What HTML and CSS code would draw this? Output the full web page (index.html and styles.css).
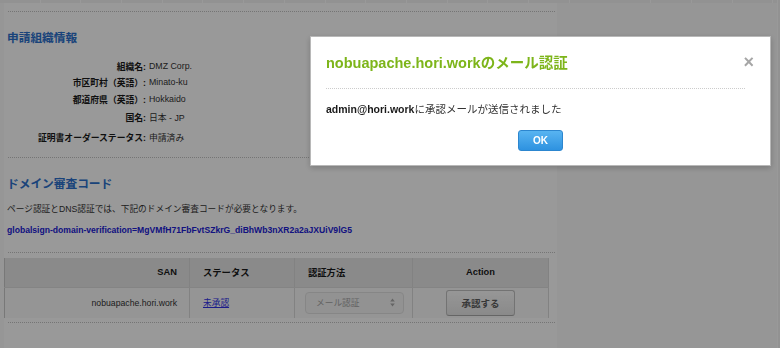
FILE: index.html
```html
<!DOCTYPE html>
<html lang="ja">
  <head>
    <meta charset="UTF-8" />
    <meta name="viewport" content="width=device-width, initial-scale=1.0" />
    <title>証明書申請</title>
    <link rel="stylesheet" href="styles.css">
  </head>
  <body>
    <div class="page">
      <div class="topbar"></div>

      <main class="panel">
        <hr class="dots" />

        <section class="org">
          <h2 class="heading">申請組織情報</h2>
          <dl class="info">
            <dt>組織名:</dt>
            <dd>DMZ Corp.</dd>
            <dt>市区町村（英語）:</dt>
            <dd>Minato-ku</dd>
            <dt>都道府県（英語）:</dt>
            <dd>Hokkaido</dd>
            <dt>国名:</dt>
            <dd>日本 - JP</dd>
            <dt>証明書オーダーステータス:</dt>
            <dd>申請済み</dd>
          </dl>
        </section>

        <hr class="dots" />

        <section class="domain">
          <h2 class="heading">ドメイン審査コード</h2>
          <p class="note">ページ認証とDNS認証では、下記のドメイン審査コードが必要となります。</p>
          <p class="code">globalsign-domain-verification=MgVMfH71FbFvtSZkrG_diBhWb3nXR2a2aJXUiV9lG5</p>
        </section>

        <hr class="dots" />

        <table class="san-table">
          <thead>
            <tr>
              <th class="col-san">SAN</th>
              <th class="col-status">ステータス</th>
              <th class="col-method">認証方法</th>
              <th class="col-action">Action</th>
            </tr>
          </thead>
          <tbody>
            <tr>
              <td class="col-san">nobuapache.hori.work</td>
              <td class="col-status"><a href="#" class="pending">未承認</a></td>
              <td class="col-method">
                <div class="select">
                  <span>メール認証</span>
                  <svg width="5" height="9" viewBox="0 0 5 9">
                    <path d="M2.5 0.5 L4.8 3.5 L0.2 3.5 Z M2.5 8.5 L4.8 5.5 L0.2 5.5 Z" fill="#a8a8a8" />
                  </svg>
                </div>
              </td>
              <td class="col-action"><button class="approve-btn">承認する</button></td>
            </tr>
          </tbody>
        </table>

        <hr class="dots" />
      </main>
    </div>
    <div class="edge"></div>

    <div class="backdrop"></div>

    <div class="modal">
      <button class="close">&times;</button>
      <h3 class="modal-title">nobuapache.hori.workのメール認証</h3>
      <hr class="modal-line" />
      <p class="modal-msg"><strong>admin@hori.work</strong>に承認メールが送信されました</p>
      <div class="modal-footer">
        <button class="ok-btn">OK</button>
      </div>
    </div>
  </body>
</html>
```

FILE: styles.css
```css
:root {
  --blue: #2c70cc;
  --code-blue: #2020d6;
  --text: #333;
  --label: #1a1a1a;
  --dots: #c4c4c4;
  --green: #7db51a;
}

* {
  margin: 0;
  padding: 0;
  box-sizing: border-box;
  font-family: "Liberation Sans", "Noto Sans CJK JP", sans-serif;
}

body {
  width: 780px;
  height: 348px;
  overflow: hidden;
  display: flex;
  background: #fafafa;
  color: var(--text);
}

.page {
  flex: 1;
}

.edge {
  width: 3px;
  border-left: 1px solid #ffffff;
  background: #f3f3f3;
}

.topbar {
  height: 3px;
  background: repeating-linear-gradient(
    90deg,
    #f4f4f4 0,
    #f4f4f4 39.7px,
    #ffffff 39.7px,
    #ffffff 40.7px
  );
}

.panel {
  width: 553px;
  margin-left: 4px;
  padding-top: 8px;
  height: 345px;
  background: #ffffff;
}

.dots {
  border: none;
  border-top: 1px dotted var(--dots);
  margin: 0 2px 0 4px;
}

.heading {
  font-size: 11.7px;
  line-height: 16px;
  font-weight: 700;
  color: var(--blue);
  padding-left: 3px;
  margin-top: 18px;
}

/* organisation rows */
.info {
  display: grid;
  grid-template-columns: 142px 1fr;
  grid-template-rows: 16px 16px 18px 18px 22px;
  column-gap: 3px;
  align-items: center;
  margin-top: 12px;
  margin-bottom: 9px;
  font-size: 8.8px;
}

.info dt {
  text-align: right;
  font-weight: 700;
  color: var(--label);
}

.info dd {
  color: var(--text);
}

.domain {
  padding-bottom: 15px;
}

.note {
  font-size: 8.7px;
  line-height: 14px;
  padding-left: 3px;
  margin-top: 10px;
}

.code {
  font-size: 8.6px;
  line-height: 14px;
  font-weight: 700;
  color: var(--code-blue);
  padding-left: 3px;
  margin-top: 7px;
}

/* SAN table */
.san-table {
  width: 545px;
  margin-top: 5px;
  margin-bottom: 4px;
  border-collapse: collapse;
  border-left: 1px solid #c9c9c9;
  border-right: 1px solid #d9d9d9;
  table-layout: fixed;
}

.san-table th {
  height: 29px;
  background: #e7e7e7;
  font-size: 9.3px;
  font-weight: 700;
  color: #1a1a1a;
  border-bottom: 1px solid #dddddd;
}

.san-table td {
  height: 31px;
  background: #f9f9f9;
  font-size: 8.7px;
}

.san-table th + th,
.san-table td + td {
  border-left: 1px solid #d9d9d9;
}

.col-san {
  width: 185px;
  text-align: right;
  padding-right: 12px;
}

.col-status {
  width: 105px;
  text-align: left;
  padding-left: 13px;
}

.col-method {
  width: 118px;
  text-align: left;
  padding-left: 13px;
}

td.col-method {
  padding-left: 10px;
}

.col-action {
  text-align: center;
}

.pending {
  color: #3030e6;
  text-decoration: underline;
}

.select {
  width: 99px;
  height: 22px;
  display: flex;
  align-items: center;
  justify-content: space-between;
  padding: 0 8px 0 10px;
  background: #f4f4f4;
  border: 1px solid #e0e0e0;
  border-radius: 4px;
  color: #a4a4a4;
  font-size: 8.7px;
}

.approve-btn {
  width: 69px;
  height: 26px;
  border: 1px solid #c0c0c0;
  border-bottom-color: #a8a8a8;
  border-radius: 3px;
  background: linear-gradient(#fbfbfb, #e6e6e6);
  color: #5e5e5e;
  font-size: 9.5px;
  font-weight: 700;
}

/* modal */
.backdrop {
  position: fixed;
  inset: 0;
  background: rgba(0, 0, 0, 0.4);
}

.modal {
  position: fixed;
  left: 310px;
  top: 36px;
  width: 461px;
  height: 130px;
  background: #ffffff;
  border: 1px solid #b8b8b8;
  box-shadow: 0 2px 6px rgba(0, 0, 0, 0.2);
  padding-top: 16px;
}

.close {
  position: absolute;
  top: 15px;
  right: 16px;
  border: none;
  background: none;
  font-size: 18px;
  line-height: 20px;
  font-weight: 700;
  color: #a6a6a6;
}

.modal-title {
  font-size: 14.5px;
  line-height: 20px;
  font-weight: 700;
  color: var(--green);
  padding-left: 15px;
}

.modal-line {
  border: none;
  border-top: 1px dotted #cccccc;
  margin: 15px 25px 0 15px;
}

.modal-msg {
  font-size: 10.5px;
  line-height: 14px;
  color: #333;
  padding-left: 15px;
  margin-top: 13px;
}

.modal-msg strong {
  color: #1a1a1a;
}

.modal-footer {
  display: flex;
  justify-content: center;
  margin-top: 14px;
}

.ok-btn {
  width: 45px;
  height: 21px;
  border: 1px solid #2c86cf;
  border-radius: 3px;
  background: linear-gradient(#58b4f1, #2e92e0);
  color: #ffffff;
  font-size: 10px;
  font-weight: 700;
}
```
